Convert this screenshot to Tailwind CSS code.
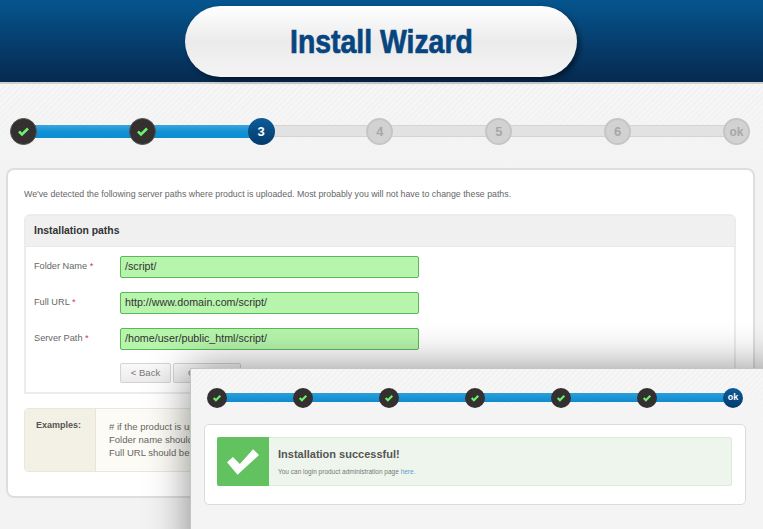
<!DOCTYPE html>
<html><head><meta charset="utf-8"><script src="https://cdn.jsdelivr.net/npm/@tailwindcss/browser@4"></script></head>
<body class="m-0">
<div class="relative w-[763px] h-[529px] overflow-hidden bg-[#f4f3f4] font-['Liberation_Sans',Arial,sans-serif]">
  <header class="h-[82px] border-b-[2px] border-[#cfcfcf] bg-gradient-to-b from-[#05558f] to-[#052a50] flex justify-center box-content">
    <div class="mt-[6px] ml-[-1px] w-[392px] h-[71px] rounded-[36px] bg-gradient-to-b from-white via-[#ebebeb] to-[#f4f4f4] shadow-[3px_3px_5px_rgba(0,0,0,0.45)] flex items-center justify-center">
      <h1 class="-mt-[2px] text-[#06457f] font-bold text-[34px] leading-none scale-x-[0.835] whitespace-nowrap [-webkit-text-stroke:0.7px_#06457f]">Install Wizard</h1>
    </div>
  </header>

  <div class="h-[81px] pt-[34px] px-[10px] bg-[linear-gradient(to_bottom,transparent,#f4f3f4),repeating-linear-gradient(135deg,#f3f2f3_0,#f3f2f3_2px,#f8f7f8_2px,#f8f7f8_4px)]">
    <div class="relative w-[740px] h-[27px] flex items-center justify-between">
      <div class="absolute left-[10px] right-[10px] top-[7px] h-[12px] bg-[#e2e2e2] border border-[#d4d4d4]"></div>
      <div class="absolute left-[10px] w-[240px] top-[7px] h-[13px] bg-gradient-to-b from-[#3aa6dc] via-[#0f92d6] to-[#0c8bd0]"></div>
      <div class="relative w-[27px] h-[27px] rounded-full bg-[#33302f] border border-[#555] flex items-center justify-center"><svg width="13" height="11" viewBox="0 0 13 11"><path d="M2 5.5 5 8.5 11 2.5" fill="none" stroke="#6ef06e" stroke-width="2.6"/></svg></div>
      <div class="relative w-[27px] h-[27px] rounded-full bg-[#33302f] border border-[#555] flex items-center justify-center"><svg width="13" height="11" viewBox="0 0 13 11"><path d="M2 5.5 5 8.5 11 2.5" fill="none" stroke="#6ef06e" stroke-width="2.6"/></svg></div>
      <div class="relative w-[27px] h-[27px] rounded-full bg-gradient-to-b from-[#0d5d99] to-[#043a6d] flex items-center justify-center text-white font-bold text-[13px]">3</div>
      <div class="relative w-[27px] h-[27px] rounded-full bg-[#d3d2d2] border-2 border-[#c6c5c5] flex items-center justify-center text-[#a9a7a7] font-bold text-[13px]">4</div>
      <div class="relative w-[27px] h-[27px] rounded-full bg-[#d3d2d2] border-2 border-[#c6c5c5] flex items-center justify-center text-[#a9a7a7] font-bold text-[13px]">5</div>
      <div class="relative w-[27px] h-[27px] rounded-full bg-[#d3d2d2] border-2 border-[#c6c5c5] flex items-center justify-center text-[#a9a7a7] font-bold text-[13px]">6</div>
      <div class="relative w-[27px] h-[27px] rounded-full bg-[#d3d2d2] border-2 border-[#c6c5c5] flex items-center justify-center text-[#a9a7a7] font-bold text-[12px]">ok</div>
    </div>
  </div>

  <section class="ml-[6px] mt-[3px] w-[749px] h-[330px] bg-white rounded-[8px] border-2 border-[#dedede] px-[16px] pt-[17px]">
    <p class="text-[8.8px] leading-[14px] text-[#666]">We've detected the following server paths where product is uploaded. Most probably you will not have to change these paths.</p>
    <div class="mt-[13px] w-[712px] h-[180px] border-2 border-[#ececec] rounded-t-[6px]">
      <div class="h-[31px] bg-[#f0f0f0] border-b border-[#e8e8e8] flex items-center pl-[8px] text-[10.4px] font-bold text-[#333]">Installation paths</div>
      <div class="pl-[8px] pt-[9px] flex flex-col gap-[15px]">
        <div class="flex items-center h-[21px]"><label class="w-[86px] text-[9.2px] text-[#666]">Folder Name <span class="text-[#d33]">*</span></label><div class="w-[299px] h-[22px] bg-[#b6f5ab] border border-[#5ab85a] rounded-[2px] flex items-center px-[4px] text-[10.7px] text-[#333]">/script/</div></div>
        <div class="flex items-center h-[21px]"><label class="w-[86px] text-[9.2px] text-[#666]">Full URL <span class="text-[#d33]">*</span></label><div class="w-[299px] h-[22px] bg-[#b6f5ab] border border-[#5ab85a] rounded-[2px] flex items-center px-[4px] text-[10.7px] text-[#333]">http://www.domain.com/script/</div></div>
        <div class="flex items-center h-[21px]"><label class="w-[86px] text-[9.2px] text-[#666]">Server Path <span class="text-[#d33]">*</span></label><div class="w-[299px] h-[22px] bg-[#b6f5ab] border border-[#5ab85a] rounded-[2px] flex items-center px-[4px] text-[10.7px] text-[#333]">/home/user/public_html/script/</div></div>
      </div>
      <div class="flex gap-[2px] ml-[94px] mt-[14px]">
        <div class="w-[51px] h-[20px] bg-gradient-to-b from-[#f9f9f9] to-[#ececec] border border-[#d4d4d4] rounded-[2px] flex items-center justify-center text-[9.5px] text-[#777]">&lt; Back</div>
        <div class="w-[68px] h-[20px] bg-gradient-to-b from-[#f9f9f9] to-[#ececec] border border-[#d4d4d4] rounded-[2px] flex items-center justify-center text-[9.5px] text-[#777]">Continue</div>
      </div>
    </div>
    <div class="mt-[14px] h-[64px] w-[712px] border border-[#ebe8d8] rounded-[4px] flex overflow-hidden">
      <div class="w-[71px] bg-[#f3f1e6] border-r border-[#e8e5d5] pl-[11px] pt-[10px] text-[9px] font-bold text-[#555]">Examples:</div>
      <div class="flex-1 bg-[#fcfbf5] pl-[13px] pt-[11px] text-[9.5px] leading-[13px] text-[#666]">
        <p># if the product is uploaded</p><p>Folder name should be</p><p>Full URL should be:</p>
      </div>
    </div>
  </section>

  <section class="absolute left-[190px] top-[368px] w-[600px] h-[200px] bg-[#f5f4f5] border border-[#bfc7c4] shadow-[0_0_40px_rgba(0,0,0,0.45)] bg-[linear-gradient(to_bottom,transparent,#f5f4f5_60px),repeating-linear-gradient(135deg,#f3f2f3_0,#f3f2f3_2px,#f8f7f8_2px,#f8f7f8_4px)]">
    <div class="relative ml-[16px] mt-[19px] w-[536px] h-[20px] flex items-center justify-between">
      <div class="absolute left-[10px] right-[10px] top-[5px] h-[9px] bg-gradient-to-b from-[#2a9fd9] to-[#0c8bd0]"></div>
      <div class="relative w-[20px] h-[20px] rounded-full bg-[#33302f] flex items-center justify-center"><svg width="10" height="8" viewBox="0 0 13 11"><path d="M2 5.5 5 8.5 11 2.5" fill="none" stroke="#6ef06e" stroke-width="3"/></svg></div>
      <div class="relative w-[20px] h-[20px] rounded-full bg-[#33302f] flex items-center justify-center"><svg width="10" height="8" viewBox="0 0 13 11"><path d="M2 5.5 5 8.5 11 2.5" fill="none" stroke="#6ef06e" stroke-width="3"/></svg></div>
      <div class="relative w-[20px] h-[20px] rounded-full bg-[#33302f] flex items-center justify-center"><svg width="10" height="8" viewBox="0 0 13 11"><path d="M2 5.5 5 8.5 11 2.5" fill="none" stroke="#6ef06e" stroke-width="3"/></svg></div>
      <div class="relative w-[20px] h-[20px] rounded-full bg-[#33302f] flex items-center justify-center"><svg width="10" height="8" viewBox="0 0 13 11"><path d="M2 5.5 5 8.5 11 2.5" fill="none" stroke="#6ef06e" stroke-width="3"/></svg></div>
      <div class="relative w-[20px] h-[20px] rounded-full bg-[#33302f] flex items-center justify-center"><svg width="10" height="8" viewBox="0 0 13 11"><path d="M2 5.5 5 8.5 11 2.5" fill="none" stroke="#6ef06e" stroke-width="3"/></svg></div>
      <div class="relative w-[20px] h-[20px] rounded-full bg-[#33302f] flex items-center justify-center"><svg width="10" height="8" viewBox="0 0 13 11"><path d="M2 5.5 5 8.5 11 2.5" fill="none" stroke="#6ef06e" stroke-width="3"/></svg></div>
      <div class="relative w-[20px] h-[20px] rounded-full bg-gradient-to-b from-[#0d5d99] to-[#043a6d] flex items-center justify-center text-white font-bold text-[9px]">ok</div>
    </div>
    <div class="ml-[13px] mt-[16px] w-[542px] h-[81px] bg-white border border-[#dcdcdc] rounded-[5px] pt-[12px] px-[12px]">
      <div class="h-[49px] w-[515px] flex bg-[#eef5ec] border border-[#dcebd8] rounded-[2px]">
        <div class="w-[52px] -m-px h-[49px] bg-[#61c25f] rounded-l-[2px] flex items-center justify-center"><svg width="32" height="26" viewBox="114 258 97 78"><polygon points="114,298 132,282 153,303 193,258 211,276 146,336" fill="#fff"/></svg></div>
        <div class="pl-[10px] pt-[8px]">
          <p class="text-[11px] leading-[16px] font-bold text-[#555]">Installation successful!</p>
          <p class="mt-[5px] text-[6.5px] leading-[10px] text-[#777]">You can login product administration page <span class="text-[#5aa0c8]">here.</span></p>
        </div>
      </div>
    </div>
  </section>
</div>
</body></html>
